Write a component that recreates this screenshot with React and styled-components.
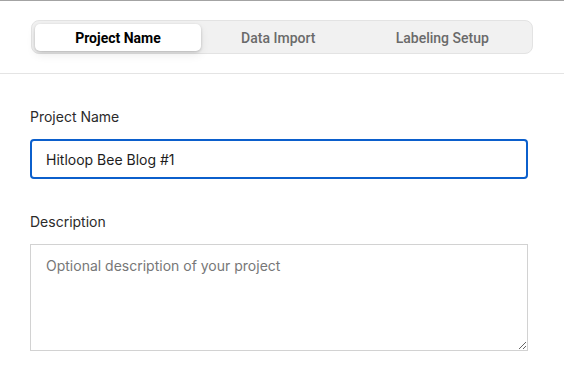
import React, { useState } from "react";
import styled, { createGlobalStyle } from "styled-components";

const GlobalStyle = createGlobalStyle`
  html, body {
    margin: 0;
    padding: 0;
    background: #ffffff;
  }
  body {
    font-family: Inter, "Noto Sans", sans-serif;
  }
`;

const STEPS = ["Project Name", "Data Import", "Labeling Setup"];

function App() {
  const [step, setStep] = useState(0);
  const [name, setName] = useState("Hitloop Bee Blog #1");

  return (
    <Page>
      <GlobalStyle />
      <Header>
        <Tabs>
          {STEPS.map((label, i) => (
            <Tab key={label} $active={i === step} onClick={() => setStep(i)}>
              {label}
            </Tab>
          ))}
        </Tabs>
      </Header>
      <Form>
        <Field>
          <Label>Project Name</Label>
          <Input value={name} onChange={(e) => setName(e.target.value)} />
        </Field>
        <Field>
          <Label>Description</Label>
          <TextArea placeholder="Optional description of your project" />
        </Field>
      </Form>
    </Page>
  );
}

export default App;

const Page = styled.div`
  min-height: 376px;
  border-top: 1px solid #a3a3a3;
  box-sizing: border-box;
`;

const Header = styled.div`
  display: flex;
  justify-content: center;
  padding: 19px 0 19px;
  border-bottom: 1px solid #e4e4e4;
`;

const Tabs = styled.div`
  display: flex;
  width: 502px;
  box-sizing: border-box;
  padding: 3px 3px 2px;
  background: #f1f1f1;
  border: 1px solid #e3e3e3;
  border-radius: 8px;
`;

const Tab = styled.div`
  flex: 1 1 auto;
  height: 27px;
  display: flex;
  align-items: center;
  justify-content: center;
  font-family: Roboto, "Liberation Sans", sans-serif;
  font-size: 14px;
  font-weight: ${(p) => (p.$active ? 700 : 500)};
  color: ${(p) => (p.$active ? "#000000" : "#6a6a6a")};
  background: ${(p) => (p.$active ? "#ffffff" : "transparent")};
  border-radius: 5px;
  box-shadow: ${(p) =>
    p.$active ? "0 1px 3px rgba(0,0,0,0.2), 0 4px 10px rgba(0,0,0,0.08)" : "none"};
  cursor: pointer;
`;

const Form = styled.div`
  display: flex;
  flex-direction: column;
  gap: 34px;
  padding: 34px 36px 0 30px;
`;

const Field = styled.div`
  display: flex;
  flex-direction: column;
  gap: 14px;
`;

const Label = styled.label`
  font-size: 14px;
  line-height: 17px;
  color: #2b2b2b;
`;

const Input = styled.input`
  height: 40px;
  box-sizing: border-box;
  padding: 0 14px;
  font-family: Inter, "Noto Sans", sans-serif;
  font-size: 14px;
  color: #1d1d1d;
  border: 2px solid #0b5fcc;
  border-radius: 4px;
  outline: none;
`;

const TextArea = styled.textarea`
  height: 107px;
  box-sizing: border-box;
  padding: 12px 15px;
  font-family: Inter, "Noto Sans", sans-serif;
  font-size: 14px;
  color: #1d1d1d;
  border: 1px solid #d2d2d2;
  border-radius: 0;
  outline: none;
  resize: vertical;
  &::placeholder {
    color: #777777;
  }
`;
